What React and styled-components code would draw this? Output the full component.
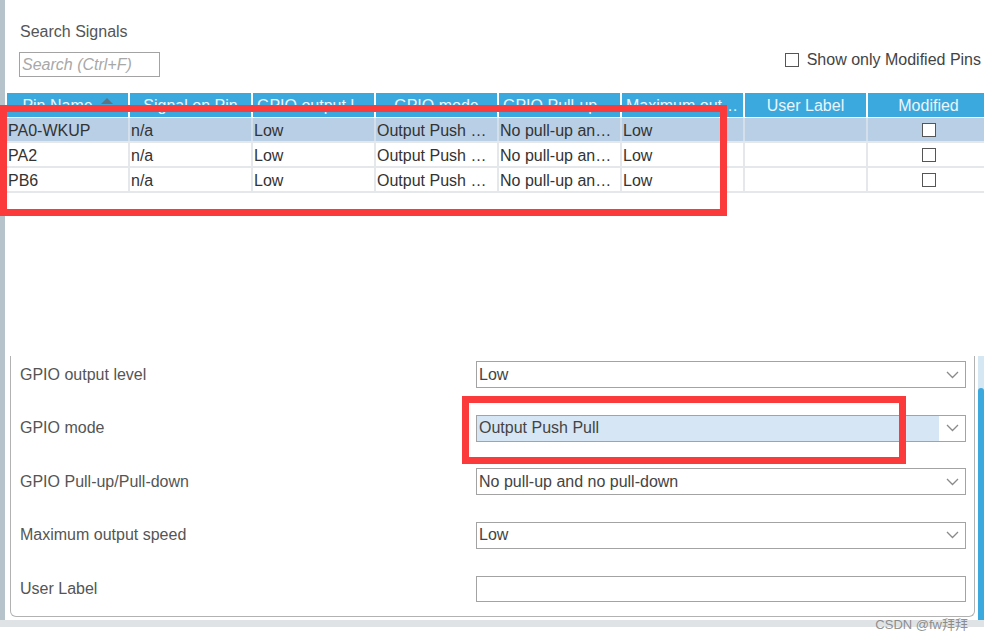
import React from "react";
import styled, { createGlobalStyle } from "styled-components";

const GlobalStyle = createGlobalStyle`
  html, body {
    margin: 0;
    padding: 0;
    width: 984px;
    height: 639px;
    overflow: hidden;
    background: #ffffff;
    font-family: "Liberation Sans", Arial, sans-serif;
  }
`;

const columns = [
  { title: "Pin Name", sort: true },
  { title: "Signal on Pin" },
  { title: "GPIO output level" },
  { title: "GPIO mode" },
  { title: "GPIO Pull-up/Pull-down" },
  { title: "Maximum output speed" },
  { title: "User Label" },
  { title: "Modified" },
];

const pins = [
  { name: "PA0-WKUP", selected: true },
  { name: "PA2" },
  { name: "PB6" },
];

const fields = [
  { label: "GPIO output level", value: "Low", kind: "select" },
  { label: "GPIO mode", value: "Output Push Pull", kind: "select", focused: true },
  { label: "GPIO Pull-up/Pull-down", value: "No pull-up and no pull-down", kind: "select" },
  { label: "Maximum output speed", value: "Low", kind: "select" },
  { label: "User Label", value: "", kind: "input" },
];

const Chevron = () => (
  <svg width="13" height="8" viewBox="0 0 13 8">
    <polyline points="1,1 6.5,6.5 12,1" fill="none" stroke="#8a8a8a" strokeWidth="1.3" />
  </svg>
);

function App() {
  return (
    <>
      <GlobalStyle />
      <Screen>
        <Frame>
          <LeftRail />
          <Main>
            <SearchArea>
              <SearchTitle>Search Signals</SearchTitle>
              <SearchRow>
                <SearchInput placeholder="Search (Ctrl+F)" />
                <CheckLabel>
                  <Box />
                  Show only Modified Pins
                </CheckLabel>
              </SearchRow>
            </SearchArea>

            <Table>
              <HeaderRow>
                {columns.map(c => (
                  <HeadCell key={c.title}>
                    <HeadText>{c.title}</HeadText>
                    {c.sort && <SortArrow />}
                  </HeadCell>
                ))}
              </HeaderRow>
              {pins.map(p => (
                <Row key={p.name} selected={p.selected}>
                  <Cell>{p.name}</Cell>
                  <Cell>n/a</Cell>
                  <Cell>Low</Cell>
                  <Cell>Output Push Pull</Cell>
                  <Cell>No pull-up and no pull-down</Cell>
                  <Cell>Low</Cell>
                  <Cell />
                  <BoxCell>
                    <Box />
                  </BoxCell>
                </Row>
              ))}
            </Table>

            <Spacer />

            <PanelArea>
              <Card>
                {fields.map(f => (
                  <FieldRow key={f.label}>
                    <FieldLabel>{f.label}</FieldLabel>
                    {f.kind === "select" ? (
                      <Select>
                        <SelectValue focused={f.focused}>{f.value}</SelectValue>
                        <ChevronBox>
                          <Chevron />
                        </ChevronBox>
                      </Select>
                    ) : (
                      <TextField />
                    )}
                  </FieldRow>
                ))}
              </Card>
              <ScrollTrack>
                <ScrollThumb />
              </ScrollTrack>
            </PanelArea>
          </Main>
        </Frame>
        <BottomStrip />

        <Callout style={{ left: 0, top: 105, width: 727, height: 111 }} />
        <Callout style={{ left: 462, top: 396, width: 444, height: 68 }} />
        <Watermark>CSDN @fw拜拜</Watermark>
      </Screen>
    </>
  );
}

const Screen = styled.div`
  position: relative;
  width: 984px;
  height: 639px;
  overflow: hidden;
  background: #ffffff;
`;

const Frame = styled.div`
  display: flex;
  height: 620px;
`;

const LeftRail = styled.div`
  width: 5px;
  flex-shrink: 0;
  background: #b7c3cb;
`;

const Main = styled.div`
  flex: 1;
  display: flex;
  flex-direction: column;
  min-width: 0;
`;

const SearchArea = styled.div`
  padding: 23px 0 0 15px;
`;

const SearchTitle = styled.div`
  font-size: 16px;
  line-height: 18px;
  color: #555;
`;

const SearchRow = styled.div`
  display: flex;
  align-items: flex-start;
  justify-content: space-between;
  margin-top: 11px;
`;

const SearchInput = styled.input`
  box-sizing: border-box;
  width: 141px;
  height: 25px;
  margin-left: -1px;
  border: 1px solid #a3a3a3;
  padding: 0 2px;
  font-family: "Liberation Sans", Arial, sans-serif;
  font-size: 16px;
  color: #444;
  outline: none;
  &::placeholder {
    color: #a8a8a8;
    font-style: italic;
  }
`;

const CheckLabel = styled.label`
  display: flex;
  align-items: center;
  gap: 8px;
  height: 18px;
  margin-top: -1px;
  margin-right: 3px;
  font-size: 16px;
  color: #444;
  white-space: nowrap;
`;

const Box = styled.span`
  display: inline-block;
  box-sizing: border-box;
  width: 14px;
  height: 14px;
  border: 1.5px solid #555;
  background: #fff;
`;

const Table = styled.div`
  margin: 16px 0 0 2px;
  width: 990px;
`;

const grid = `
  display: grid;
  grid-template-columns: repeat(8, 121px);
  column-gap: 2px;
`;

const HeaderRow = styled.div`
  ${grid}
  height: 24px;
  margin-bottom: 1px;
`;

const HeadCell = styled.div`
  display: flex;
  align-items: center;
  justify-content: center;
  gap: 8px;
  padding: 1px 4px 0;
  background: #3ba9dd;
  min-width: 0;
`;

const HeadText = styled.span`
  font-size: 16px;
  color: #eaf5fc;
  white-space: nowrap;
  overflow: hidden;
  text-overflow: ellipsis;
`;

const SortArrow = styled.span`
  flex-shrink: 0;
  width: 0;
  height: 0;
  margin-top: -10px;
  border-left: 6px solid transparent;
  border-right: 6px solid transparent;
  border-bottom: 6px solid #5e7484;
`;

const Row = styled.div`
  ${grid}
  height: 23px;
  background: ${p => (p.selected ? "#d3dfea" : "#e4e8eb")};
  border-bottom: 2px solid #e4e8eb;
  & > div {
    background: ${p => (p.selected ? "#b9cfe5" : "#ffffff")};
  }
`;

const Cell = styled.div`
  padding: 1px 0 0 1px;
  font-size: 16px;
  line-height: 23px;
  color: #333;
  white-space: nowrap;
  overflow: hidden;
  text-overflow: ellipsis;
  min-width: 0;
`;

const BoxCell = styled.div`
  display: flex;
  align-items: center;
  justify-content: center;
`;

const Spacer = styled.div`
  flex: 1;
`;

const PanelArea = styled.div`
  display: flex;
  height: 264px;
  padding-left: 5px;
`;

const Card = styled.div`
  box-sizing: border-box;
  width: 966px;
  height: 261px;
  border: 1px solid #b2b2b2;
  border-top: none;
  border-radius: 0 0 6px 6px;
  padding: 5px 8px 0 9px;
  display: flex;
  flex-direction: column;
  gap: 26.5px;
`;

const FieldRow = styled.div`
  display: grid;
  grid-template-columns: 456px 1fr;
  align-items: center;
  height: 27px;
`;

const FieldLabel = styled.div`
  font-size: 16px;
  color: #555;
  white-space: nowrap;
`;

const Select = styled.div`
  box-sizing: border-box;
  height: 27px;
  display: flex;
  border: 1px solid #a3a3a3;
  background: #fff;
`;

const SelectValue = styled.div`
  flex: 1;
  display: flex;
  align-items: center;
  padding-left: 2px;
  font-size: 16px;
  color: #444;
  background: ${p => (p.focused ? "#d7e6f4" : "#ffffff")};
`;

const ChevronBox = styled.div`
  width: 26px;
  display: flex;
  align-items: center;
  justify-content: center;
`;

const TextField = styled.div`
  box-sizing: border-box;
  height: 26px;
  border: 1px solid #a3a3a3;
  background: #fff;
`;

const ScrollTrack = styled.div`
  margin-left: 3px;
  width: 6px;
  height: 264px;
  background: #d6e7f4;
  display: flex;
  flex-direction: column;
  justify-content: flex-end;
`;

const ScrollThumb = styled.div`
  height: 232px;
  background: #3ba9dd;
  border-radius: 3px 3px 0 0;
`;

const BottomStrip = styled.div`
  height: 7px;
  background: #dfe3e6;
`;

const Callout = styled.div`
  position: absolute;
  box-sizing: border-box;
  border: 7px solid #fa3a3b;
  pointer-events: none;
`;

const Watermark = styled.div`
  position: absolute;
  right: 16px;
  top: 614px;
  font-family: "Liberation Sans", "Noto Sans CJK SC", sans-serif;
  font-size: 13px;
  color: rgba(110, 110, 110, 0.75);
`;

export default App;
